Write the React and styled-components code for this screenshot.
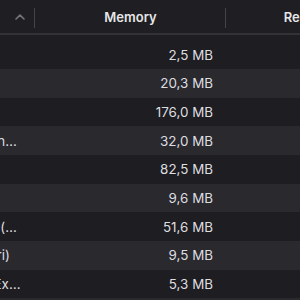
import React from "react";
import styled, { createGlobalStyle } from "styled-components";

const Global = createGlobalStyle`
  html, body {
    margin: 0;
    padding: 0;
    background: #1e1d21;
    overflow: hidden;
  }
  body {
    font-family: Inter, "Noto Sans", sans-serif;
    -webkit-font-smoothing: antialiased;
  }
`;

const Table = styled.div`
  width: 300px;
  height: 300px;
  overflow: hidden;
  background: #1e1d21;
  display: flex;
  flex-direction: column;
`;

const Header = styled.div`
  display: grid;
  grid-template-columns: 35px 191px 198px;
  height: 33px;
  flex: none;
  background: #1f1e22;
  border-bottom: 2px solid #333237;
`;

const HeadCell = styled.div`
  position: relative;
  display: flex;
  align-items: center;
  justify-content: ${(p) => (p.$align === "end" ? "flex-end" : "center")};
  padding-right: ${(p) => p.$pr || 0}px;
  font-size: 13px;
  font-weight: 600;
  color: #e6e6e8;
  white-space: nowrap;

  &::after {
    content: "";
    position: absolute;
    right: 0;
    top: 8px;
    width: 1px;
    height: 20px;
    background: #45444a;
  }
`;

const Chevron = styled.svg`
  display: block;
  width: 10px;
  height: 6px;
`;

const Body = styled.div`
  padding-top: 5.3px;
  display: flex;
  flex-direction: column;
`;

const Row = styled.div`
  display: grid;
  grid-template-columns: 35px 191px 198px;
  height: 28.7px;
  flex: none;
  background: ${(p) => (p.$alt ? "#2a292e" : "#1e1d21")};
  font-size: 13.4px;
  color: #dedee0;
`;

const NameCell = styled.div`
  display: flex;
  align-items: center;
  justify-content: flex-end;
  overflow: hidden;
  white-space: nowrap;
  padding-right: ${(p) => p.$pr}px;
`;

const ValueCell = styled.div`
  display: flex;
  align-items: center;
  justify-content: flex-end;
  padding-right: 13px;
  white-space: nowrap;
`;

const rows = [
  { name: "", mem: "2,5 MB", pr: 18 },
  { name: "", mem: "20,3 MB", pr: 18 },
  { name: "", mem: "176,0 MB", pr: 18 },
  { name: "com.apple.WebKit.WebAuthn…", mem: "32,0 MB", pr: 18.3 },
  { name: "", mem: "82,5 MB", pr: 18 },
  { name: "", mem: "9,6 MB", pr: 18 },
  { name: "Safari Networking (…", mem: "51,6 MB", pr: 18.3 },
  { name: "Safari Web Content (Safari)", mem: "9,5 MB", pr: 25 },
  { name: "com.apple.Safari.SafeBrowsing.Ex…", mem: "5,3 MB", pr: 14.5 },
  { name: "", mem: "", pr: 18 },
];

export default function App() {
  return (
    <>
      <Global />
      <Table>
        <Header>
          <HeadCell $align="end" $pr={10}>
            <Chevron viewBox="0 0 10 6">
              <path
                d="M1 5 L5 1.2 L9 5"
                fill="none"
                stroke="#77767c"
                strokeWidth="1.6"
                strokeLinecap="round"
                strokeLinejoin="round"
              />
            </Chevron>
          </HeadCell>
          <HeadCell>Memory</HeadCell>
          <HeadCell>Real Memory</HeadCell>
        </Header>
        <Body>
          {rows.map((r, i) => (
            <Row key={i} $alt={i % 2 === 1}>
              <NameCell $pr={r.pr}>{r.name}</NameCell>
              <ValueCell>{r.mem}</ValueCell>
              <ValueCell />
            </Row>
          ))}
        </Body>
      </Table>
    </>
  );
}
